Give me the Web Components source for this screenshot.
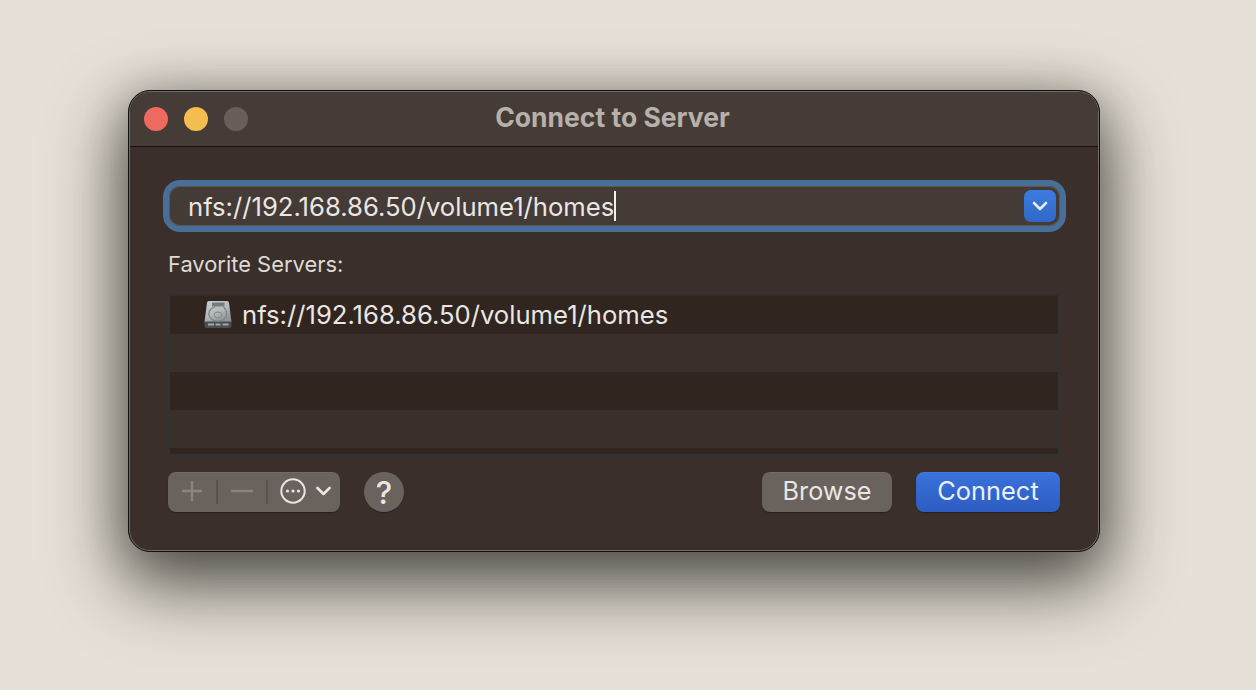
<!DOCTYPE html>
<html>
<head>
<meta charset="utf-8">
<title>Connect to Server</title>
<style>
  html, body { margin: 0; height: 100%; overflow: hidden; }
  body {
    background: #e6e0d6;
    font-family: Inter, "Liberation Sans", sans-serif;
    padding: 90px 0 0 128px;
    box-sizing: border-box;
  }
</style>
</head>
<body>
<server-window heading="Connect to Server">
  <server-field value="nfs://192.168.86.50/volume1/homes"></server-field>
  <server-list label="Favorite Servers:">
    <server-row>nfs://192.168.86.50/volume1/homes</server-row>
    <server-row></server-row>
    <server-row></server-row>
    <server-row></server-row>
    <server-row></server-row>
  </server-list>
  <server-actions></server-actions>
</server-window>

<script>
class ServerWindow extends HTMLElement {
  constructor() {
    super();
    this.attachShadow({ mode: 'open' });
    this.shadowRoot.innerHTML = `
      <style>
        :host {
          display: block; width: 972px; height: 462px; box-sizing: border-box;
          border-radius: 22px; background: #3a2f2b;
          border: 1px solid #12100e;
          box-shadow: inset 0 0 0 1px #716a65, 0 28px 70px 6px rgba(30,30,25,.72), 0 4px 40px 4px rgba(50,50,42,.22);
        }
        .clip { height: 100%; border-radius: 21px; overflow: hidden; padding: 1px; box-sizing: border-box; display: flex; flex-direction: column; }
        .bar {
          flex: none; height: 54px; background: #453c37; border-bottom: 1px solid #14110f;
          border-radius: 20px 20px 0 0; display: flex; align-items: center; padding-left: 14px;
          position: relative;
        }
        .dot { width: 24px; height: 24px; border-radius: 50%; margin-right: 16px; }
        .title {
          position: absolute; left: -3px; right: 0; top: 9px; text-align: center;
          color: #b8b0aa; font-size: 26.5px; line-height: 32px; font-weight: 700;
        }
        .body { flex: 1; padding: 33px 33px 0 33px; display: flex; flex-direction: column; border-radius: 0 0 20px 20px; }
      </style>
      <div class="clip">
        <div class="bar">
          <span class="dot" style="background:#ef6a5e"></span>
          <span class="dot" style="background:#f4bd4f"></span>
          <span class="dot" style="background:#685f5b"></span>
          <span class="title"></span>
        </div>
        <div class="body"><slot></slot></div>
      </div>`;
    this.shadowRoot.querySelector('.title').textContent = this.getAttribute('heading');
  }
}

class ServerField extends HTMLElement {
  constructor() {
    super();
    this.attachShadow({ mode: 'open' });
    this.shadowRoot.innerHTML = `
      <style>
        :host {
          display: flex; align-items: center; box-sizing: border-box; height: 52px; margin-right: -1px;
          border: 6px solid #476f98; border-radius: 17px; background: #443a36;
          box-shadow: inset 0 0 0 1px #5d5650; padding: 0 4px 0 19px; color: #e9e6e3;
          font-size: 25.65px;
        }
        .text { white-space: nowrap; }
        .caret { width: 2px; height: 30px; background: #f2f0ee; }
        .grow { flex: 1; }
        .drop {
          width: 32px; height: 32px; border-radius: 7px;
          background: linear-gradient(#3d7be0, #2f69c8);
          display: flex; align-items: center; justify-content: center;
        }
      </style>
      <span class="text"></span><span class="caret"></span><span class="grow"></span>
      <span class="drop">
        <svg width="16" height="10" viewBox="0 0 16 10"><path d="M2 2l6 6 6-6" fill="none" stroke="#e6edf9" stroke-width="2.6" stroke-linecap="round" stroke-linejoin="round"/></svg>
      </span>`;
    this.shadowRoot.querySelector('.text').textContent = this.getAttribute('value');
  }
}

class ServerList extends HTMLElement {
  constructor() {
    super();
    this.attachShadow({ mode: 'open' });
    this.shadowRoot.innerHTML = `
      <style>
        :host { display: block; color: #dedad6; }
        .label { font-size: 21.9px; line-height: 24px; margin: 20px 0 18px 5px; white-space: nowrap; }
        .box {
          margin-left: 5px; width: 892px; height: 162px; box-sizing: border-box; overflow: hidden;
          border: 2px solid #2f3432; border-top-color: #332d2a; background: #30251f;
          display: flex; flex-direction: column;
        }
      </style>
      <div class="label"></div>
      <div class="box"><slot></slot></div>`;
    this.shadowRoot.querySelector('.label').textContent = this.getAttribute('label');
  }
}

class ServerRow extends HTMLElement {
  constructor() {
    super();
    this.attachShadow({ mode: 'open' });
    const filled = this.textContent.trim() !== '';
    this.shadowRoot.innerHTML = `
      <style>
        :host {
          display: flex; align-items: center; flex: none; height: 38px; gap: 9px; box-sizing: border-box;
          padding: 0 0 2px 33px; color: #e9e6e3; font-size: 25.65px;
        }
        :host(:nth-child(even)) { background: #3a302b; }
        :host(:nth-child(odd)) { background: #30251f; }
        svg { flex: none; }
      </style>
      ${filled ? `<svg width="30" height="30" viewBox="0 0 30 30">
        <defs>
          <linearGradient id="disk" x1="0" y1="0" x2="0.6" y2="1">
            <stop offset="0" stop-color="#c9cdce"/><stop offset=".6" stop-color="#b4babb"/><stop offset="1" stop-color="#8d9596"/>
          </linearGradient>
        </defs>
        <path d="M6 2h18a2 2 0 0 1 2 1.800L28.500 23H1.500L4 3.800A2 2 0 0 1 6 2z" fill="url(#disk)"/>
        <path d="M1.500 22.500h27V27a2 2 0 0 1-2 2h-23a2 2 0 0 1-2-2z" fill="#4a4e50"/>
        <path d="M5 25.500h6M12.500 25.500h5M19.500 25.500h6" stroke="#a3a8aa" stroke-width="2"/>
        <rect x="9" y="3.500" width="12.500" height="4" fill="#757c7e"/>
        <ellipse cx="15" cy="16" rx="4" ry="3" fill="none" stroke="#7f8789" stroke-width="1"/>
        <path d="M20.500 8c3.500 3 3.800 7.500 2 10.500-2.500 3.500-8 4.500-12 2.800C6.500 19.500 5 15.500 6.500 12c1-2 3-3.400 5.500-4" fill="none" stroke="#7a8284" stroke-width="1.200"/>
      </svg>` : ''}
      <slot></slot>`;
  }
}

class ServerActions extends HTMLElement {
  constructor() {
    super();
    this.attachShadow({ mode: 'open' });
    this.shadowRoot.innerHTML = `
      <style>
        :host { display: flex; align-items: center; margin: 16px 5px 0 5px; height: 40px; }
        .seg, .help, .btn { background: #6a625d; box-shadow: 0 1px 1px rgba(0,0,0,.3), inset 0 1px 0 rgba(255,255,255,.06); }
        .seg { width: 172px; height: 40px; border-radius: 8px; display: flex; align-items: center; }
        .sep { width: 2px; height: 24px; background: #5a524d; }
        .cell { display: flex; align-items: center; justify-content: center; padding-bottom: 2px; }
        .more { width: 72px; gap: 10px; padding-left: 12px; justify-content: flex-start; box-sizing: border-box; }
        .help {
          width: 40px; height: 40px; border-radius: 50%; margin-left: 24px; color: #e9e6e3;
          display: flex; align-items: center; justify-content: center; font-size: 31px; font-weight: 500; box-sizing: border-box;
        }
        .grow { flex: 1; }
        .btn {
          height: 40px; border-radius: 8px; display: flex; align-items: center; justify-content: center;
          color: #e9e6e3; font-size: 25.2px; padding-bottom: 3px; box-sizing: border-box;
        }
        .browse { width: 130px; margin-right: 24px; }
        .connect { width: 144px; background: linear-gradient(#3a72dc, #2c5cc0); color: #eaf0fb; font-size: 25.4px; }
      </style>
      <div class="seg">
        <span class="cell" style="width:48px">
          <svg width="22" height="22" viewBox="0 0 22 22"><path d="M11 1v20M1 11h20" stroke="#8a837e" stroke-width="2.400"/></svg>
        </span>
        <span class="sep"></span>
        <span class="cell" style="width:48px">
          <svg width="22" height="4" viewBox="0 0 22 4"><path d="M0 2h22" stroke="#8a837e" stroke-width="2.400"/></svg>
        </span>
        <span class="sep"></span>
        <span class="cell more">
          <svg width="26" height="26" viewBox="0 0 26 26">
            <circle cx="13" cy="13" r="11.700" fill="none" stroke="#e9e6e3" stroke-width="2"/>
            <circle cx="7.500" cy="13" r="1.600" fill="#e9e6e3"/><circle cx="13" cy="13" r="1.600" fill="#e9e6e3"/><circle cx="18.500" cy="13" r="1.600" fill="#e9e6e3"/>
          </svg>
          <svg width="15" height="10" viewBox="0 0 15 10"><path d="M1.500 2l6 6 6-6" fill="none" stroke="#e9e6e3" stroke-width="2.600" stroke-linecap="round" stroke-linejoin="round"/></svg>
        </span>
      </div>
      <div class="help">?</div>
      <span class="grow"></span>
      <div class="btn browse">Browse</div>
      <div class="btn connect">Connect</div>`;
  }
}

customElements.define('server-window', ServerWindow);
customElements.define('server-field', ServerField);
customElements.define('server-list', ServerList);
customElements.define('server-row', ServerRow);
customElements.define('server-actions', ServerActions);
</script>
</body>
</html>
